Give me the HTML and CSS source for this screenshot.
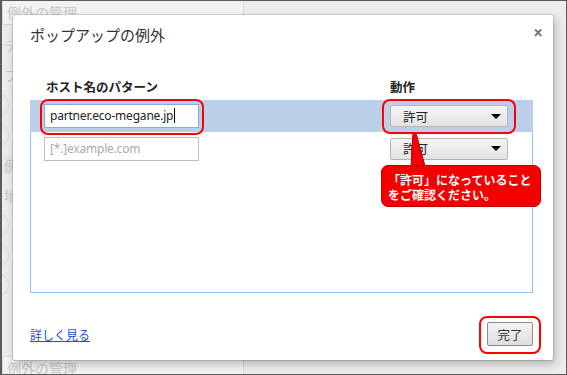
FILE: index.html
```html
<!DOCTYPE html>
<html lang="ja">
<head>
  <meta charset="UTF-8" />
  <title>ポップアップの例外</title>
  <link rel="stylesheet" href="styles.css">
</head>
<body>
  <div class="screen">

    <div class="backdrop">
      <div class="bg-tab">例外の管理</div>
      <div class="bg-item bg-link">テ</div>
      <div class="bg-item">フ</div>
      <div class="bg-item bg-dot"></div>
      <div class="bg-item bg-dot"></div>
      <div class="bg-item bg-box">例</div>
      <div class="bg-item">地</div>
      <div class="bg-item bg-dot"></div>
      <div class="bg-item bg-dot"></div>
      <div class="bg-item bg-dot"></div>
      <div class="bg-tab bg-bottom">例外の管理</div>
    </div>

    <div class="dialog">
      <div class="dialog-head">
        <h1>ポップアップの例外</h1>
        <span class="close">×</span>
      </div>

      <div class="cols">
        <span>ホスト名のパターン</span>
        <span>動作</span>
      </div>

      <div class="list">
        <div class="row selected">
          <div class="field active">partner.eco-megane.jp<span class="caret"></span></div>
          <div class="select">許可<span class="arrow"></span></div>
          <div class="ring ring-host"></div>
          <div class="ring ring-action"></div>
        </div>
        <div class="row">
          <div class="field empty">[*.]example.com</div>
          <div class="select">許可<span class="arrow"></span></div>
        </div>
      </div>

      <div class="dialog-foot">
        <a href="#" class="more">詳しく見る</a>
        <div class="done-wrap">
          <button class="done">完了</button>
          <div class="ring ring-done"></div>
        </div>
      </div>

      <div class="callout">
        <svg class="callout-tail" width="20" height="34" viewBox="0 0 20 34">
          <polygon points="6,0 9,0 18,33 4,33" fill="#f40000" stroke="#c00000" stroke-width="1"/>
        </svg>
        <div class="callout-box">「許可」になっていること<br>をご確認ください。</div>
      </div>
    </div>

  </div>
</body>
</html>
```

FILE: styles.css
```css
* { margin: 0; padding: 0; box-sizing: border-box; }
body { width: 567px; height: 375px; overflow: hidden; font-family: "Noto Sans", "Noto Sans CJK JP", sans-serif; color: #333; }
.screen { position: relative; width: 567px; height: 375px; background: #ececec; border: 1px solid #5c5c5c; border-left-width: 2px; overflow: hidden; }

/* faded page behind the dialog */
.backdrop { display: flex; flex-direction: column; gap: 10px; height: 100%; color: #c8c8c8; font-size: 14px; }
.bg-tab { width: 242px; height: 24px; padding: 1px 4px; border: 1px solid #dadada; border-top: none; background: #f3f3f3; }
.bg-item { height: 20px; padding-left: 2px; }
.bg-link { color: #c6d0e2; }
.bg-dot { width: 14px; height: 20px; margin-left: -7px; border: 1px solid #dcdcdc; border-radius: 50%; }
.bg-box { background: #e6e6e6; width: 12px; }
.bg-bottom { margin-top: auto; height: 18px; border-top: 1px solid #dadada; border-bottom: none; }

.dialog { position: absolute; left: 11px; top: 14px; width: 540px; height: 345px; padding: 0 20px 0 17px; background: #fff; border-radius: 2px; box-shadow: 0 0 0 1px rgba(0,0,0,.12), 2px 4px 10px rgba(0,0,0,.25); }
.dialog-head { display: flex; justify-content: space-between; align-items: flex-start; height: 62px; padding-top: 10px; }
.dialog-head h1 { font-family: "Noto Sans CJK JP", sans-serif; font-weight: normal; font-size: 15px; line-height: 20px; color: #333; }
.close { margin: -2px -10px 0 0; font-size: 17px; font-weight: bold; color: #777; line-height: 20px; }

.cols { display: grid; grid-template-columns: 344px 1fr; padding-left: 16px; height: 23px; font-family: "Noto Sans CJK JP", sans-serif; font-weight: bold; font-size: 12.5px; color: #222; }

.list { height: 193px; border: 1px solid #92c0ee; border-top: none; }
.row { position: relative; display: grid; grid-template-columns: 346px 118px; align-items: center; height: 33px; padding-left: 13px; }
.row.selected { height: 32px; margin: 0 -1px; padding-left: 14px; background: #bbcfe9; }
.field { width: 155px; height: 24px; padding: 0 5px; border: 1px solid #bdbdbd; background: #fff; font-size: 12px; line-height: 22px; color: #222; letter-spacing: -0.2px; }
.field.active { border-color: #7faee6; }
.field.empty { color: #aaa; }
.caret { display: inline-block; width: 1px; height: 15px; margin-left: 1px; background: #000; vertical-align: -3px; }
.select { display: flex; justify-content: space-between; align-items: center; height: 22px; padding: 0 6px 0 12px; border: 1px solid #b5b5b5; border-radius: 2px; background: linear-gradient(#f6f6f6, #e3e3e3); font-family: "Noto Sans CJK JP", sans-serif; font-size: 12.5px; color: #222; }
.arrow { width: 0; height: 0; border-left: 5px solid transparent; border-right: 5px solid transparent; border-top: 5px solid #000; }

.ring { position: absolute; border: 2px solid #f00; border-radius: 8px; }
.ring-host { left: 10px; top: -1px; width: 164px; height: 36px; }
.ring-action { left: 352px; top: -1px; width: 134px; height: 35px; }

.dialog-foot { display: flex; justify-content: space-between; align-items: center; padding-top: 29px; }
.more { font-family: "Noto Sans CJK JP", sans-serif; font-size: 12px; color: #1d4fd1; text-decoration: underline; }
.done-wrap { position: relative; }
.done { width: 46px; height: 24px; border: 1px solid #8a8a8a; border-radius: 2px; background: linear-gradient(#f4f4f4, #dedede); font-family: "Noto Sans CJK JP", sans-serif; font-size: 12.5px; color: #333; }
.ring-done { left: -8px; top: -6px; width: 62px; height: 38px; }

.callout { position: absolute; left: 368px; top: 118px; width: 160px; }
.callout-tail { display: block; margin-left: 26px; margin-bottom: -2px; position: relative; z-index: 1; }
.callout-box { height: 42px; padding: 6px 0 0 6px; background: #f40000; border: 1px solid #c00000; border-radius: 7px; font-family: "Noto Sans CJK JP", sans-serif; font-weight: bold; font-size: 12px; line-height: 15px; color: #fff; }
```
